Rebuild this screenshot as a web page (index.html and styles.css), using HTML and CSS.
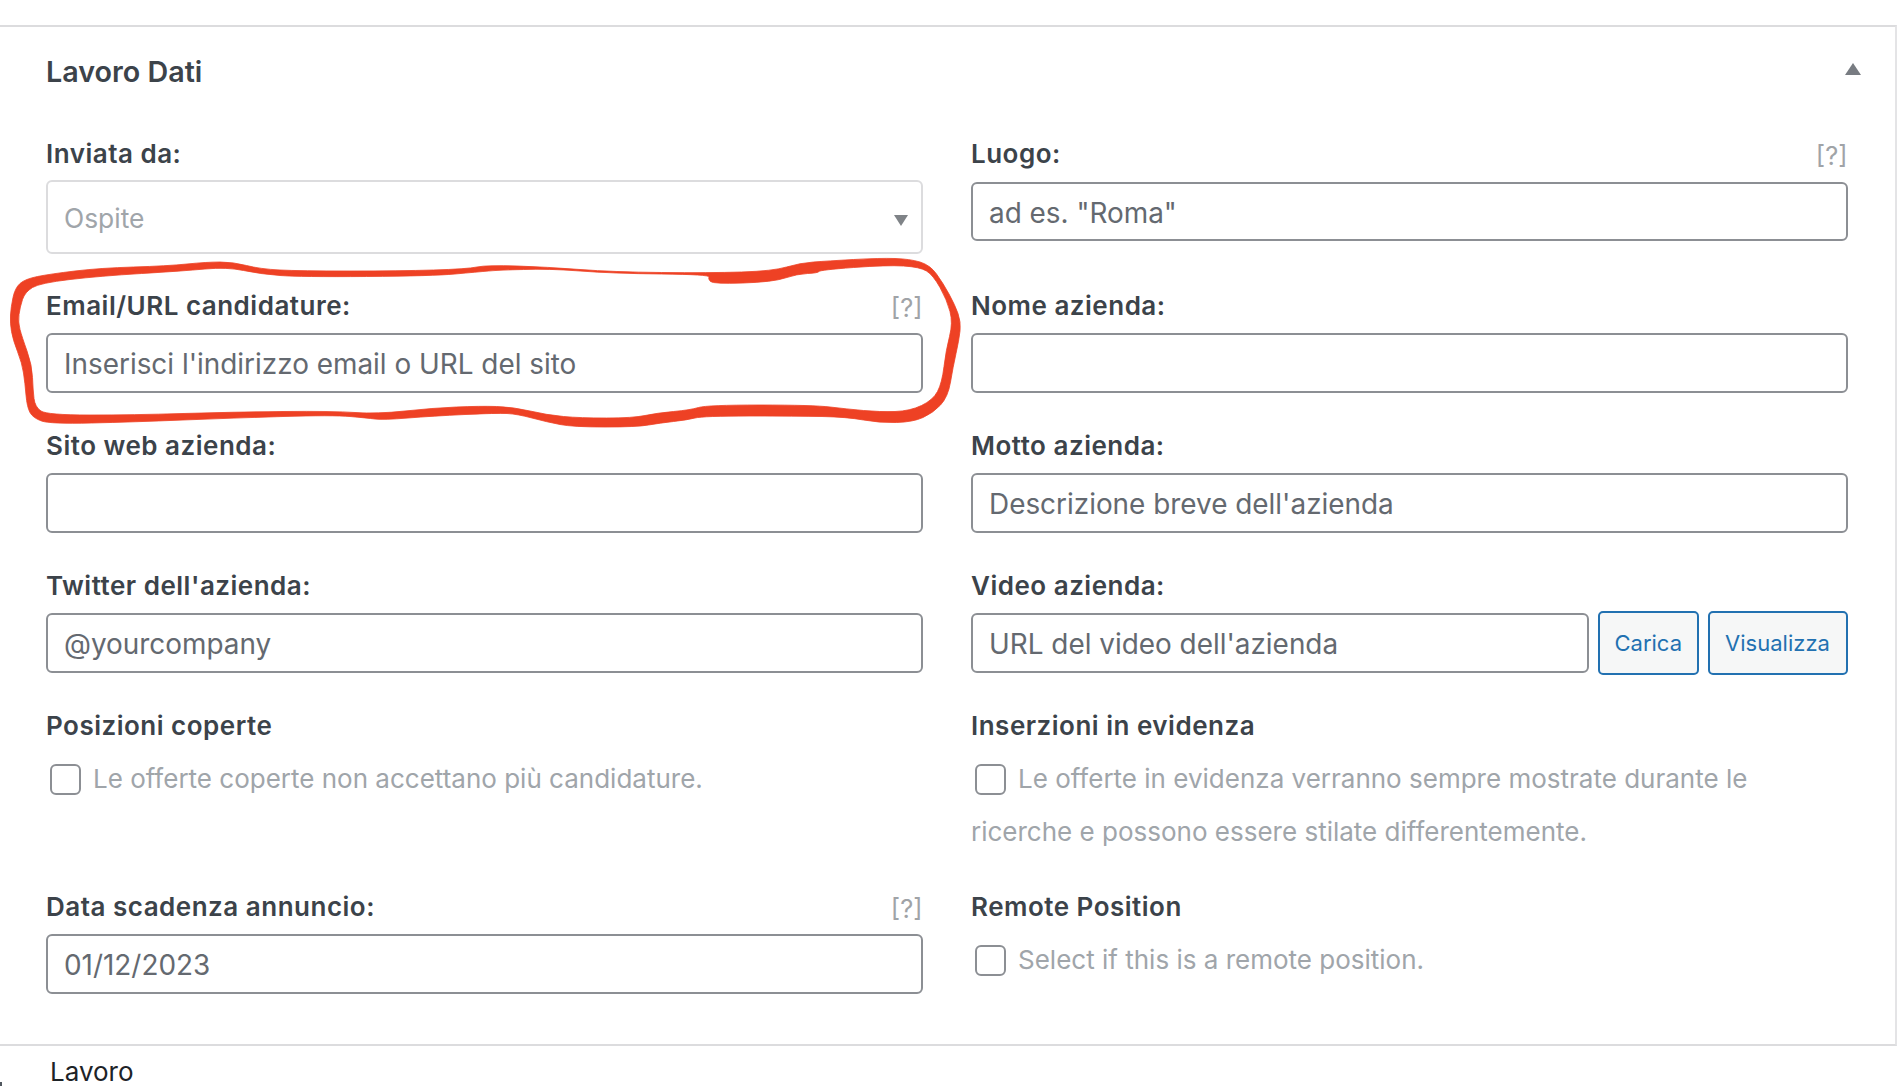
FILE: index.html
```html
<!DOCTYPE html>
<html lang="it">
<head>
<meta charset="utf-8">
<title>Lavoro Dati</title>
<link rel="stylesheet" href="styles.css">
</head>
<body>
<main class="page">
  <section class="panel">
    <header class="panel-head">
      <h2 class="panel-title">Lavoro Dati</h2>
      <svg class="toggle" viewBox="0 0 16 12" aria-hidden="true"><path d="M8 0L16 12H0Z"/></svg>
    </header>
    <div class="grid">
      <div class="field field-select">
        <div class="label-row label-row-first"><label class="label">Inviata da:</label></div>
        <div class="select"><span>Ospite</span><svg class="select-arrow" viewBox="0 0 14 11" aria-hidden="true"><path d="M0 0H14L7 11Z"/></svg></div>
      </div>
      <div class="field">
        <div class="label-row label-row-first"><label class="label">Luogo:</label><span class="tip">[?]</span></div>
        <input class="input input-offset" placeholder="ad es. &quot;Roma&quot;">
      </div>
      <div class="field">
        <div class="label-row"><label class="label">Email/URL candidature:</label><span class="tip">[?]</span></div>
        <input class="input" placeholder="Inserisci l'indirizzo email o URL del sito">
      </div>
      <div class="field">
        <div class="label-row"><label class="label">Nome azienda:</label></div>
        <input class="input">
      </div>
      <div class="field">
        <div class="label-row"><label class="label">Sito web azienda:</label></div>
        <input class="input">
      </div>
      <div class="field">
        <div class="label-row"><label class="label">Motto azienda:</label></div>
        <input class="input" placeholder="Descrizione breve dell'azienda">
      </div>
      <div class="field">
        <div class="label-row"><label class="label">Twitter dell'azienda:</label></div>
        <input class="input" placeholder="@yourcompany">
      </div>
      <div class="field">
        <div class="label-row"><label class="label">Video azienda:</label></div>
        <div class="video-row">
          <input class="input input-grow" placeholder="URL del video dell'azienda">
          <button class="btn btn-upload">Carica</button>
          <button class="btn btn-view">Visualizza</button>
        </div>
      </div>
      <div class="field field-check">
        <div class="label-row"><label class="label">Posizioni coperte</label></div>
        <p class="check-text"><span class="check"></span>Le offerte coperte non accettano più candidature.</p>
      </div>
      <div class="field field-check">
        <div class="label-row"><label class="label">Inserzioni in evidenza</label></div>
        <p class="check-text"><span class="check"></span>Le offerte in evidenza verranno sempre mostrate durante le ricerche e possono essere stilate differentemente.</p>
      </div>
      <div class="field">
        <div class="label-row"><label class="label">Data scadenza annuncio:</label><span class="tip">[?]</span></div>
        <input class="input" value="01/12/2023">
      </div>
      <div class="field field-check">
        <div class="label-row"><label class="label">Remote Position</label></div>
        <p class="check-text"><span class="check"></span>Select if this is a remote position.</p>
      </div>
    </div>
  </section>
  <div class="tab">Lavoro</div>
  <span class="corner-mark"></span>
  <svg class="scribble" viewBox="0 0 1000 460" aria-hidden="true">
    <path class="scribble-ink" fill-rule="evenodd" d="M11.5 331.5Q10 323 10.5 315Q11 307 13 297.5Q15 288 20 283.5Q25 279 37.5 276.5Q50 274 75 271Q100 268 133.5 267Q167 266 187 264Q207 262 220 262Q233 262 246.5 265.5Q260 269 280 270Q300 271 350 271Q400 271 433.5 270Q467 269 477 267Q487 265 517 266Q547 267 580 269.5Q613 272 661.5 272.5Q710 273 741.5 272Q773 271 786.5 267Q800 263 813.5 262Q827 261 853.5 259.5Q880 258 895 258.5Q910 259 920 262Q930 265 936.5 274Q943 283 949 294Q955 305 958 313.5Q961 322 960 331Q959 340 956 353.5Q953 367 950.5 382Q948 397 940.5 405Q933 413 923 417.5Q913 422 896.5 422.5Q880 423 863.5 420Q847 417 822 416.5Q797 416 750 416Q703 416 695 418Q687 420 673.5 421.5Q660 423 648.5 425Q637 427 605 427Q573 427 560 424.5Q547 422 532 418Q517 414 507 413.5Q497 413 465 414.5Q433 416 408 418Q383 420 375 419Q367 418 350 416.5Q333 415 283 416.5Q233 418 183 420Q133 422 91.5 423Q50 424 41.5 421Q33 418 30 412.5Q27 407 26 395Q25 383 23.5 373Q22 363 17.5 351.5Q13 340 11.5 331.5Z M20 329.5Q18 322 19 314.5Q20 307 22.5 299.5Q25 292 32.5 287.5Q40 283 70 279.5Q100 276 141.5 273.5Q183 271 205 269Q227 267 243.5 270.5Q260 274 280 275.5Q300 277 366.5 276.5Q433 276 455 274Q477 272 488.5 271Q500 270 523.5 269.5Q547 268.5 580 271Q613 273.5 661.5 274Q710 274.5 709 277Q708 279 710.5 281.5Q713 284 743 283Q773 282 785 278Q797 274 807.5 273.5Q818 273 819 271.5Q820 270 853.5 267.5Q887 265 903.5 266Q920 267 926.5 271Q933 275 940 287.5Q947 300 950 311.5Q953 323 949.5 336.5Q946 350 944 366.5Q942 383 937.5 391.5Q933 400 921.5 405.5Q910 411 895 411.5Q880 412 863.5 410.5Q847 409 830 407Q813 405 760 405Q707 405 698.5 407.5Q690 410 673.5 411.5Q657 413 645 415.5Q633 418 606.5 418Q580 418 563.5 416.5Q547 415 530 411Q513 407 496.5 406.5Q480 406 456.5 407Q433 408 405 411Q377 414 355 412.5Q333 411 283 411.5Q233 412 183 413.5Q133 415 90 415Q47 415 41 411Q35 407 34 398.5Q33 390 32.5 377.5Q32 365 27 351Q22 337 20 329.5Z"/>
  </svg>
</main>
</body>
</html>
```
FILE: styles.css
```css
* { box-sizing: border-box; }
html, body { margin: 0; padding: 0; }
body {
  width: 1898px;
  height: 1086px;
  overflow: hidden;
  background: #fff;
  font-family: Inter, "Liberation Sans", sans-serif;
  color: #3c434a;
}
.page { position: relative; width: 1898px; height: 1086px; padding-top: 25px; }
.panel {
  width: 1897px;
  height: 1021px;
  border-top: 2px solid #dcdcde;
  border-right: 2px solid #e4e4e6;
  border-bottom: 2px solid #dcdcde;
  background: #fff;
}
.panel-head {
  display: flex;
  justify-content: space-between;
  align-items: center;
  height: 90px;
  padding: 0 34px 0 46px;
}
.panel-title { margin: 0; font-size: 28.7px; font-weight: 600; line-height: 30px; color: #3c434a; }
.toggle { width: 16px; height: 12px; margin-top: -7px; fill: #787c82; }
.grid {
  display: grid;
  grid-template-columns: 876.5px 876.5px;
  column-gap: 48.5px;
  row-gap: 35px;
  padding: 23px 0 0 46px;
}
.field { padding-bottom: 4px; }
.field-select { padding-bottom: 3px; }
.field-check { padding-bottom: 0; }
.label-row {
  display: flex;
  justify-content: space-between;
  align-items: center;
  height: 28px;
  margin-bottom: 13px;
}
.label-row-first { margin-bottom: 12px; }
.field-check .label-row { margin-bottom: 12px; }
.label { font-size: 26px; font-weight: 600; line-height: 28px; letter-spacing: 0.5px; color: #3c434a; }
.tip { padding-top: 3px; font-size: 25.5px; line-height: 28px; color: #a0a3a7; }
.select {
  display: flex;
  justify-content: space-between;
  align-items: center;
  height: 74px;
  padding: 2px 13px 0 16px;
  border: 2px solid #dcdcde;
  border-radius: 6px;
  background: #fff;
  font-size: 26.4px;
  color: #a0a5aa;
}
.select-arrow { width: 14px; height: 11px; margin-top: 4px; fill: #7f8387; }
.input {
  display: block;
  width: 100%;
  height: 60px;
  padding: 2px 16px 0;
  border: 2px solid #8c8f94;
  border-radius: 6px;
  background: #fff;
  font-family: inherit;
  font-size: 27.9px;
  color: #646970;
  outline: 0;
}
.input::placeholder { color: #646970; opacity: 1; }
.input-offset { margin-top: 14px; height: 59px; }
.video-row { display: flex; align-items: center; gap: 8.5px; height: 60px; }
.input-grow { flex: 1 1 auto; width: auto; min-width: 0; }
.btn {
  flex: none;
  height: 64px;
  padding: 0;
  border: 2px solid #2271b1;
  border-radius: 5px;
  background: #f6f7f7;
  font-family: inherit;
  font-size: 22px;
  color: #2271b1;
}
.btn-upload { width: 101.5px; }
.btn-view { width: 140px; }
.check-text {
  margin: 0;
  font-size: 26px;
  line-height: 53px;
  color: #a0a5aa;
}
.check {
  display: inline-block;
  vertical-align: middle;
  width: 31px;
  height: 31px;
  margin: -2px 12px 0 4px;
  border: 2px solid #8c8f94;
  border-radius: 6px;
  background: #fff;
}
.tab { padding-left: 50px; margin-top: 11px; font-size: 26px; line-height: 30px; color: #1d2327; }
.corner-mark { position: absolute; left: 0; top: 1082px; width: 2px; height: 4px; background: #50575e; }
.scribble { position: absolute; left: 0; top: 0; width: 1000px; height: 460px; pointer-events: none; }
.scribble-ink { fill: #ee4124; stroke: #ee4124; stroke-width: 0.8; }
```
